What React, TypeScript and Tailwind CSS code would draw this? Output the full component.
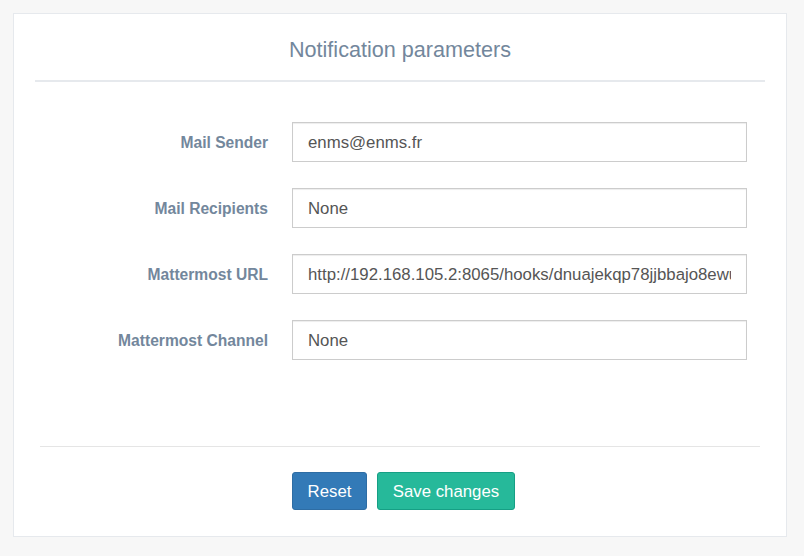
const FIELDS = [
  { label: "Mail Sender", value: "enms@enms.fr" },
  { label: "Mail Recipients", value: "None" },
  { label: "Mattermost URL", value: "http://192.168.105.2:8065/hooks/dnuajekqp78jjbbajo8ewuq3kc" },
  { label: "Mattermost Channel", value: "None" },
]

const App = () => {
  return (
    <div className="h-[556px] w-[804px] overflow-hidden bg-[#F7F7F7] pt-[13px] pl-[13px] font-['Liberation_Sans',Arial,sans-serif]">
      <div className="flex h-[524px] w-[774px] flex-col border border-[#E6E9ED] bg-white px-[21px]">
        {/* Title */}
        <div className="flex h-[68px] items-center justify-center border-b-2 border-[#E6E9ED] pt-[6px]">
          <h2 className="text-[21.6px] leading-none text-[#73879C]">Notification parameters</h2>
        </div>

        {/* Form */}
        <div className="mt-[40px] flex flex-col gap-[26px]">
          {FIELDS.map((f) => (
            <div key={f.label} className="flex items-center gap-[24px]">
              <label className="w-[233px] pt-[2px] text-right text-[15.6px] font-bold text-[#73879C]">
                {f.label}
              </label>
              <input
                readOnly
                value={f.value}
                className="h-[40px] w-[455px] border border-[#CCCCCC] bg-white px-[15px] pt-[2px] text-[16.8px] text-[#555555] shadow-[inset_0_1px_1px_rgba(0,0,0,0.075)] outline-none"
              />
            </div>
          ))}
        </div>

        <div className="mx-[5px] mt-[86px] border-t border-[#E5E5E5]" />

        {/* Buttons */}
        <div className="mt-[25px] flex gap-[10px] pl-[257px]">
          <button className="h-[38px] w-[75px] rounded-[3px] border border-[#2E6DA4] bg-[#337AB7] pt-[2px] text-[16.8px] text-white">
            Reset
          </button>
          <button className="h-[38px] w-[138px] rounded-[3px] border border-[#169F85] bg-[#26B99A] pt-[2px] text-[16.8px] text-white">
            Save changes
          </button>
        </div>
      </div>
    </div>
  )
}

export default App
